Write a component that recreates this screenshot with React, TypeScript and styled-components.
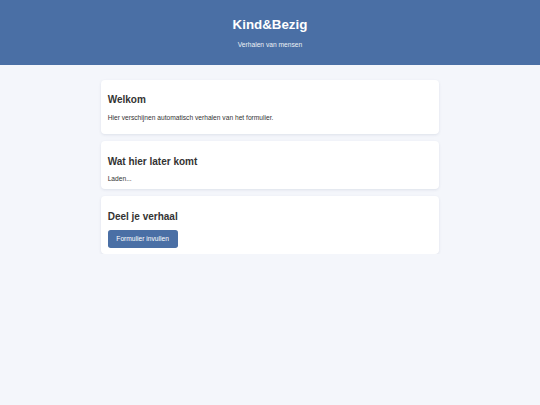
import React from "react";
import styled, { createGlobalStyle } from "styled-components";

const GlobalStyle = createGlobalStyle`
  html, body {
    margin: 0;
    padding: 0;
    background: #f4f6fb;
    font-family: "Liberation Sans", Arial, sans-serif;
    color: #333333;
  }
  * { box-sizing: border-box; }
`;

const Header = styled.header`
  background: #4a6fa5;
  color: #ffffff;
  text-align: center;
  padding: 16.5px 16px 15.5px;
`;

const Title = styled.h1`
  margin: 0 0 9.5px;
  font-size: 13.33px;
  font-weight: bold;
  line-height: 15.33px;
`;

const Subtitle = styled.p`
  margin: 0;
  font-size: 6.67px;
  line-height: 7.67px;
  opacity: 0.9;
`;

const Main = styled.main`
  max-width: 338px;
  margin: 15px auto 0;
  display: flex;
  flex-direction: column;
  gap: 7.33px;
`;

const Card = styled.section`
  background: #ffffff;
  border-radius: 4px;
  padding: 6px 6.67px;
  box-shadow: 0 1px 3px rgba(30, 50, 90, 0.1);
  display: flex;
  flex-direction: column;
  align-items: flex-start;
`;

const CardTitle = styled.h2`
  margin: 8.3px 0;
  font-size: 10px;
  font-weight: bold;
  line-height: 11.5px;
  color: #333333;
`;

const CardText = styled.p<{ $last?: boolean }>`
  margin: 0 0 ${(p) => (p.$last ? "6.67px" : "0")};
  font-size: 6.67px;
  line-height: 7.67px;
  color: #333333;
`;

const Button = styled.button`
  background: #4a6fa5;
  color: #ffffff;
  border: none;
  border-radius: 2.7px;
  padding: 5px 8.7px;
  font-family: "Liberation Sans", Arial, sans-serif;
  font-size: 6.67px;
  line-height: 7.67px;
  cursor: pointer;
`;

export default function App() {
  return (
    <>
      <GlobalStyle />
      <Header>
        <Title>Kind&amp;Bezig</Title>
        <Subtitle>Verhalen van mensen</Subtitle>
      </Header>
      <Main>
        <Card>
          <CardTitle>Welkom</CardTitle>
          <CardText $last>Hier verschijnen automatisch verhalen van het formulier.</CardText>
        </Card>
        <Card>
          <CardTitle>Wat hier later komt</CardTitle>
          <CardText>Laden...</CardText>
        </Card>
        <Card>
          <CardTitle>Deel je verhaal</CardTitle>
          <Button>Formulier invullen</Button>
        </Card>
      </Main>
    </>
  );
}
